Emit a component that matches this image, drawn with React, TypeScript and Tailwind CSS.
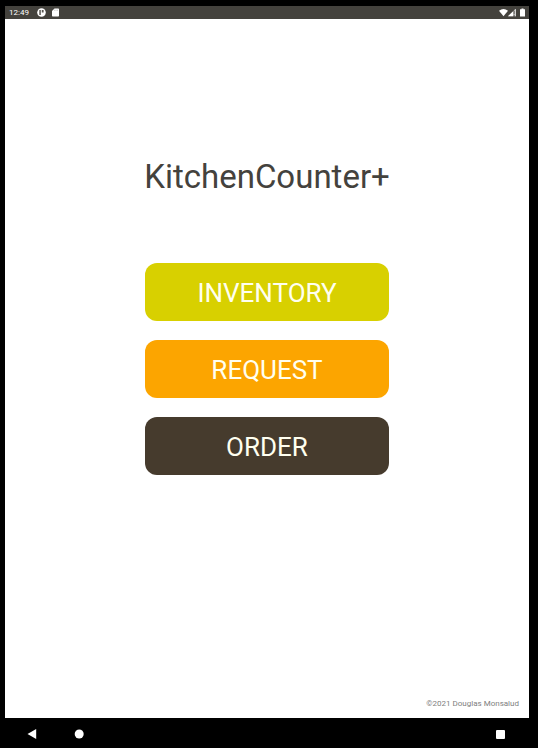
const actions = [
  { label: "INVENTORY", color: "bg-[#d8d000]" },
  { label: "REQUEST", color: "bg-[#fca500]" },
  { label: "ORDER", color: "bg-[#463b2d]" },
];

function StatusBar() {
  return (
    <header className="flex h-[13px] shrink-0 items-center justify-between bg-[#44423d] pl-1 pr-1 text-white">
      <div className="flex items-center">
        <time className="text-[8px] leading-[13px]">12:49</time>
        <svg className="ml-[8px] size-[9px]" viewBox="0 0 9 9" aria-hidden="true">
          <circle cx="4.5" cy="4.5" r="4.3" fill="white" />
          <path d="M2.3 2.1h1.5v4.8H2.3zM4.8 2.1h1.8v2.5H4.8z" fill="#55534e" />
        </svg>
        <svg className="ml-[6px] h-[9px] w-[7px]" viewBox="0 0 7 9" aria-hidden="true">
          <path d="M2.5.5H6.3Q7 .5 7 1.2V7.8Q7 8.5 6.3 8.5H.7Q0 8.5 0 7.8V3Z" fill="white" />
          <path d="M2.6 1.6v1.3M4 1.6v1.3M5.4 1.6v1.3" stroke="#aaa9a6" strokeWidth=".5" />
        </svg>
      </div>
      <div className="flex items-center">
        <svg className="h-[9px] w-[9px]" viewBox="0 0 9 9" aria-hidden="true">
          <path d="M0 2.7Q4.5-.7 9 2.7L4.5 8.2Z" fill="white" />
        </svg>
        <svg className="h-[9px] w-[8px]" viewBox="0 0 8 9" aria-hidden="true">
          <path d="M0 8.3 7.7.8V8.3Z" fill="#aaa9a6" />
          <path d="M0 8.3 5.2 3.2V8.3Z" fill="white" />
          <path d="M6.2 3v3.2M6.2 7v1.3" stroke="#44423d" strokeWidth=".9" />
          <path d="M7.3 1.2v7.1" stroke="white" strokeWidth=".8" />
        </svg>
        <svg className="ml-[4px] h-[9px] w-[5px]" viewBox="0 0 5 9" aria-hidden="true">
          <path d="M1.5.4h2v.8H5v7.2H0V1.2h1.5Z" fill="white" />
        </svg>
      </div>
    </header>
  );
}

function NavigationBar() {
  return (
    <nav className="flex h-[30px] shrink-0 items-center bg-black pb-px pl-[27px] pr-[33px] pt-[3px]">
      <button type="button" aria-label="Back" className="size-[10px]">
        <svg viewBox="0 0 10 10" className="size-full">
          <path d="M.5 5 9.2 0V10Z" fill="white" />
        </svg>
      </button>
      <button type="button" aria-label="Home" className="ml-[37px] size-[10px]">
        <svg viewBox="0 0 10 10" className="size-full">
          <circle cx="5.2" cy="5" r="4.5" fill="white" />
        </svg>
      </button>
      <button type="button" aria-label="Recent apps" className="ml-auto size-[9px] rounded-[1px] bg-white" />
    </nav>
  );
}

export default function App() {
  return (
    <div className="flex min-h-screen flex-col bg-black pt-[6px] font-['Roboto',sans-serif]">
      <div className="ml-[5px] mr-[9px] flex grow flex-col bg-white">
        <StatusBar />
        <main className="flex grow flex-col items-center pt-[138px]">
          <h1 className="text-[33px] leading-10 text-[#44423d]">KitchenCounter+</h1>
          <div className="mt-[66px] flex w-[244px] flex-col gap-[19px]">
            {actions.map(({ label, color }) => (
              <button
                key={label}
                type="button"
                className={`h-[58px] rounded-xl pt-[2px] text-[26px] leading-8 text-[#fffff0] ${color}`}
              >
                {label}
              </button>
            ))}
          </div>
        </main>
        <footer className="pb-2 pr-[10px] text-right text-[8px] leading-3 text-[#808080]">
          ©2021 Douglas Monsalud
        </footer>
      </div>
      <NavigationBar />
    </div>
  );
}
